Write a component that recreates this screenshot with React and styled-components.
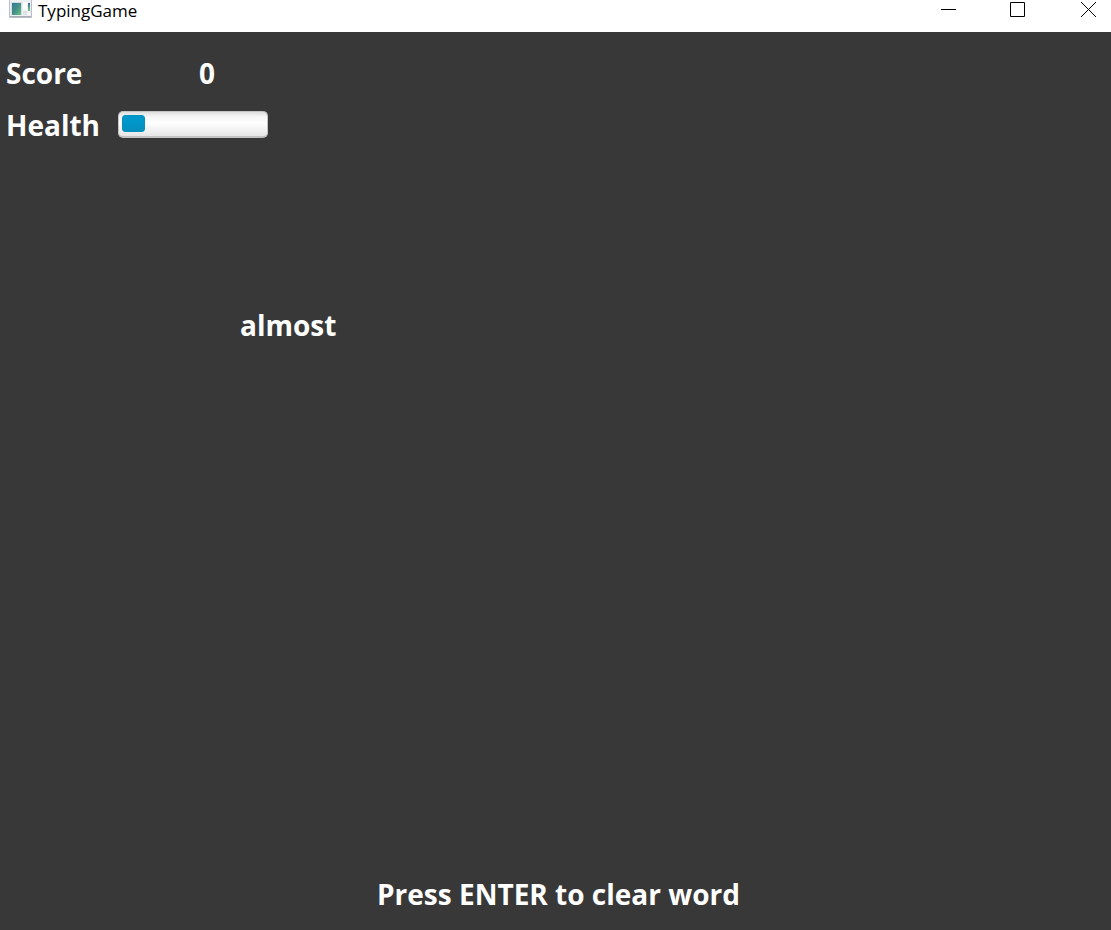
import React from "react";
import styled, { createGlobalStyle } from "styled-components";

const GlobalStyle = createGlobalStyle`
  * { box-sizing: border-box; }
  body { margin: 0; }
`;

const Window = styled.div`
  display: flex;
  flex-direction: column;
  min-height: 100vh;
  background: #383838;
  font-family: "Open Sans", "Noto Sans", sans-serif;
`;

const TitleBar = styled.header`
  display: flex;
  align-items: flex-start;
  height: 32px;
  padding-left: 9px;
  background: #fff;
  color: #000;
`;

const Title = styled.h1`
  flex: 1;
  margin: 0 0 0 6px;
  font-size: 17px;
  font-weight: 400;
  line-height: 22px;
`;

const Controls = styled.div`
  display: flex;
  gap: 24px;
`;

const ControlButton = styled.button`
  display: flex;
  justify-content: center;
  width: 46px;
  height: 32px;
  padding: 2px 0 0;
  border: 0;
  background: transparent;
  color: #000;
`;

const Game = styled.main`
  position: relative;
  display: flex;
  flex: 1;
  flex-direction: column;
  justify-content: space-between;
  padding: 15px 6px 16px;
  color: #fff;
  font-size: 28px;
  font-weight: 700;
`;

const Stats = styled.div`
  display: grid;
  grid-template-columns: 112px 150px;
  grid-auto-rows: 52px;
  align-items: center;
  line-height: 40px;
`;

const Label = styled.label`
  white-space: nowrap;
`;

const Score = styled.output`
  padding-left: 81px;
`;

const HealthBar = styled.progress`
  appearance: none;
  display: block;
  width: 150px;
  height: 27px;
  margin-bottom: 2px;
  padding: 3px 4px 4px 3px;
  border: 1px solid #c4c4c4;
  border-bottom: 2px solid #c2c2c2;
  border-radius: 5px;
  background: linear-gradient(#dedede, #f6f6f6 20%, #fff 45%, #e6e6e6);

  &::-webkit-progress-bar {
    background: transparent;
  }

  &::-webkit-progress-value {
    border: 1px solid #078fbd;
    border-radius: 3px;
    background: linear-gradient(#0598ca, #0096c9 50%, #078fbd);
  }
`;

const Word = styled.span`
  position: absolute;
  left: ${(p) => p.$x}px;
  top: ${(p) => p.$y}px;
  line-height: 40px;
`;

const Hint = styled.p`
  margin: 0;
  padding-left: 6px;
  text-align: center;
  line-height: 40px;
`;

function AppIcon() {
  return (
    <svg width="23" height="18" viewBox="0 0 23 18" aria-hidden="true">
      <defs>
        <linearGradient id="pane" x1="0" y1="0" x2="1" y2="1">
          <stop offset="0" stopColor="#35789a" />
          <stop offset="0.5" stopColor="#459087" />
          <stop offset="1" stopColor="#69c386" />
        </linearGradient>
        <linearGradient id="strip" x1="0" y1="0" x2="0" y2="1">
          <stop offset="0" stopColor="#4668a8" />
          <stop offset="1" stopColor="#75ca7b" />
        </linearGradient>
      </defs>
      <path d="M0.5 0V17.5H22.5V0" fill="#edf0f2" stroke="#b9bec9" />
      <path d="M1 16.5H22" stroke="#a9acb2" />
      <rect x="2" y="2" width="11" height="13" fill="#d5dce2" />
      <rect x="3" y="3" width="9" height="12" fill="url(#pane)" />
      <rect x="14" y="2" width="4" height="8" fill="#fff" />
      <rect x="14" y="11" width="4" height="4" fill="#e1e2e4" />
      <rect x="19" y="3" width="2" height="8" fill="url(#strip)" />
      <rect x="19" y="11" width="2" height="4" fill="#f8f8f8" />
    </svg>
  );
}

function Glyph({ d }) {
  return (
    <svg width="16" height="16" viewBox="0 0 16 16" fill="none" stroke="currentColor" aria-hidden="true">
      <path d={d} />
    </svg>
  );
}

export default function App() {
  return (
    <Window>
      <GlobalStyle />
      <TitleBar>
        <AppIcon />
        <Title>TypingGame</Title>
        <Controls>
          <ControlButton aria-label="Minimize">
            <Glyph d="M1 7.5H16" />
          </ControlButton>
          <ControlButton aria-label="Maximize">
            <Glyph d="M0.5 0.5H14.5V14.5H0.5Z" />
          </ControlButton>
          <ControlButton aria-label="Close">
            <Glyph d="M1 0L16 15M16 0L1 15" />
          </ControlButton>
        </Controls>
      </TitleBar>
      <Game>
        <Stats>
          <Label htmlFor="score">Score</Label>
          <Score id="score">0</Score>
          <Label htmlFor="health">Health</Label>
          <HealthBar id="health" value={16} max={100} />
        </Stats>
        <Word $x={240} $y={273}>almost</Word>
        <Hint>Press ENTER to clear word</Hint>
      </Game>
    </Window>
  );
}
